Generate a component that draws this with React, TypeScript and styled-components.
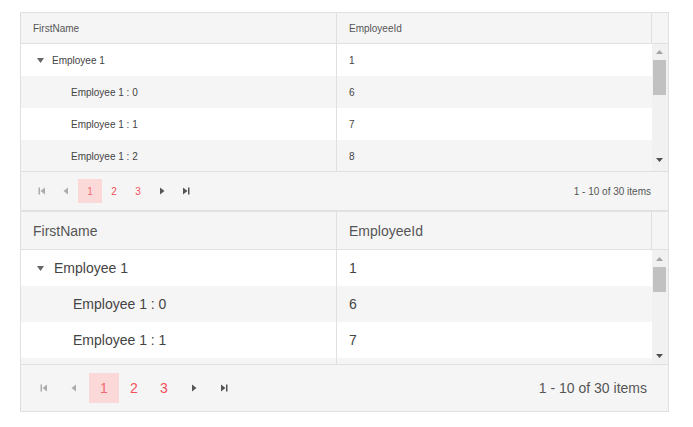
import React from 'react';
import styled, { createGlobalStyle } from 'styled-components';

type Size = 'sm' | 'lg';

const metrics = {
  sm: {
    font: 10,
    headerH: 30,
    rowH: 32,
    bodyH: 127,
    pagerH: 38,
    btn: 24,
    pagerPadL: 9,
    infoPadR: 17,
    arrowGap: 8,
    childPad: 50,
    upH: 16,
    thumbH: 35,
    scrollPadB: 3,
  },
  lg: {
    font: 14,
    headerH: 37,
    rowH: 36,
    bodyH: 114,
    pagerH: 46,
    btn: 30,
    pagerPadL: 8,
    infoPadR: 21,
    arrowGap: 10,
    childPad: 52,
    upH: 17,
    thumbH: 25,
    scrollPadB: 0,
  },
};

const GlobalStyle = createGlobalStyle`
  html, body {
    margin: 0;
    padding: 0;
    background: #ffffff;
  }
  body {
    font-family: "Liberation Sans", Arial, sans-serif;
  }
`;

const Page = styled.div`
  padding: 12px 0 0 20px;
  width: 649px;
`;

const Grid = styled.div<{ $size: Size }>`
  border: 1px solid #e0e0e0;
  font-size: ${(p) => metrics[p.$size].font}px;
  color: #444;
  & + & {
    border-top-color: #e3e3e3;
  }
`;

const HeaderRow = styled.div<{ $size: Size }>`
  display: grid;
  grid-template-columns: 316px 315px 16px;
  height: ${(p) => metrics[p.$size].headerH}px;
  background: #f5f5f5;
  border-bottom: 1px solid #e0e0e0;
`;

const HeaderCell = styled.div`
  display: flex;
  align-items: center;
  padding-left: 12px;
  border-right: 1px solid #e0e0e0;
  color: #555;
`;

const ScrollFiller = styled.div`
  background: #f5f5f5;
`;

const Body = styled.div<{ $size: Size }>`
  display: flex;
  height: ${(p) => metrics[p.$size].bodyH}px;
  overflow: hidden;
`;

const Rows = styled.div`
  width: 631px;
  overflow: hidden;
`;

const Row = styled.div<{ $size: Size; $alt: boolean }>`
  display: grid;
  grid-template-columns: 316px 315px;
  height: ${(p) => metrics[p.$size].rowH}px;
  background: ${(p) => (p.$alt ? '#f5f5f5' : '#ffffff')};
`;

const Cell = styled.div`
  display: flex;
  align-items: center;
  padding-left: 12px;
  border-right: 1px solid #e0e0e0;
  &:last-child {
    border-right: none;
  }
`;

const TreeCell = styled(Cell)<{ $size: Size; $child: boolean }>`
  padding-left: ${(p) => (p.$child ? metrics[p.$size].childPad : 16)}px;
`;

const Expander = styled.svg<{ $size: Size }>`
  width: 7px;
  height: 5px;
  margin-right: ${(p) => metrics[p.$size].arrowGap}px;
  fill: #666;
  flex: none;
`;

const ScrollBar = styled.div<{ $size: Size }>`
  width: 16px;
  background: #f1f1f1;
  display: flex;
  flex-direction: column;
  padding-bottom: ${(p) => metrics[p.$size].scrollPadB}px;
  box-sizing: border-box;
`;

const ScrollButton = styled.div<{ $size: Size; $dark?: boolean }>`
  height: ${(p) => metrics[p.$size].upH}px;
  display: flex;
  align-items: center;
  justify-content: center;
  padding-right: 1px;
  svg {
    width: 7px;
    height: 4px;
    fill: ${(p) => (p.$dark ? '#505050' : '#a3a3a3')};
  }
`;

const Thumb = styled.div<{ $size: Size }>`
  width: 13px;
  margin-left: 1px;
  height: ${(p) => metrics[p.$size].thumbH}px;
  background: #c1c1c1;
`;

const Track = styled.div`
  flex: 1;
`;

const Pager = styled.div<{ $size: Size }>`
  display: flex;
  align-items: center;
  height: ${(p) => metrics[p.$size].pagerH}px;
  padding: 0 ${(p) => metrics[p.$size].infoPadR}px 0 ${(p) => metrics[p.$size].pagerPadL}px;
  background: #f5f5f5;
  border-top: 1px solid #e0e0e0;
`;

const PagerButton = styled.div<{ $size: Size; $disabled?: boolean }>`
  width: ${(p) => metrics[p.$size].btn}px;
  height: ${(p) => metrics[p.$size].btn}px;
  display: flex;
  align-items: center;
  justify-content: center;
  svg {
    width: 8px;
    height: 8px;
    fill: ${(p) => (p.$disabled ? '#ababab' : '#555')};
  }
`;

const PageNumber = styled.div<{ $size: Size; $active?: boolean }>`
  width: ${(p) => metrics[p.$size].btn}px;
  height: ${(p) => metrics[p.$size].btn}px;
  display: flex;
  align-items: center;
  justify-content: center;
  color: ${(p) => (p.$active ? '#f26a72' : '#f4505a')};
  background: ${(p) => (p.$active ? '#fad9d8' : 'transparent')};
`;

const PagerInfo = styled.div`
  margin-left: auto;
  color: #555;
`;

const rows = [
  { name: 'Employee 1', id: 1, child: false },
  { name: 'Employee 1 : 0', id: 6, child: true },
  { name: 'Employee 1 : 1', id: 7, child: true },
  { name: 'Employee 1 : 2', id: 8, child: true },
];

function FirstIcon() {
  return (
    <svg viewBox="0 0 8 8">
      <rect x="0.5" y="0.5" width="1.5" height="7" />
      <polygon points="7,0.5 2.5,4 7,7.5" />
    </svg>
  );
}

function PrevIcon() {
  return (
    <svg viewBox="0 0 8 8">
      <polygon points="6,0.5 1.5,4 6,7.5" />
    </svg>
  );
}

function NextIcon() {
  return (
    <svg viewBox="0 0 8 8">
      <polygon points="2,0.5 6.5,4 2,7.5" />
    </svg>
  );
}

function LastIcon() {
  return (
    <svg viewBox="0 0 8 8">
      <polygon points="1,0.5 5.5,4 1,7.5" />
      <rect x="6" y="0.5" width="1.5" height="7" />
    </svg>
  );
}

function TreeGrid({ size }: { size: Size }) {
  return (
    <Grid $size={size}>
      <HeaderRow $size={size}>
        <HeaderCell>FirstName</HeaderCell>
        <HeaderCell>EmployeeId</HeaderCell>
        <ScrollFiller />
      </HeaderRow>
      <Body $size={size}>
        <Rows>
          {rows.map((r, i) => (
            <Row key={r.name} $size={size} $alt={i % 2 === 1}>
              <TreeCell $size={size} $child={r.child}>
                {!r.child && (
                  <Expander $size={size} viewBox="0 0 7 5">
                    <polygon points="0,0 7,0 3.5,5" />
                  </Expander>
                )}
                {r.name}
              </TreeCell>
              <Cell>{r.id}</Cell>
            </Row>
          ))}
        </Rows>
        <ScrollBar $size={size}>
          <ScrollButton $size={size}>
            <svg viewBox="0 0 7 4">
              <polygon points="0,4 7,4 3.5,0" />
            </svg>
          </ScrollButton>
          <Thumb $size={size} />
          <Track />
          <ScrollButton $size={size} $dark>
            <svg viewBox="0 0 7 4">
              <polygon points="0,0 7,0 3.5,4" />
            </svg>
          </ScrollButton>
        </ScrollBar>
      </Body>
      <Pager $size={size}>
        <PagerButton $size={size} $disabled>
          <FirstIcon />
        </PagerButton>
        <PagerButton $size={size} $disabled>
          <PrevIcon />
        </PagerButton>
        <PageNumber $size={size} $active>
          1
        </PageNumber>
        <PageNumber $size={size}>2</PageNumber>
        <PageNumber $size={size}>3</PageNumber>
        <PagerButton $size={size}>
          <NextIcon />
        </PagerButton>
        <PagerButton $size={size}>
          <LastIcon />
        </PagerButton>
        <PagerInfo>1 - 10 of 30 items</PagerInfo>
      </Pager>
    </Grid>
  );
}

export default function App() {
  return (
    <>
      <GlobalStyle />
      <Page>
        <TreeGrid size="sm" />
        <TreeGrid size="lg" />
      </Page>
    </>
  );
}
